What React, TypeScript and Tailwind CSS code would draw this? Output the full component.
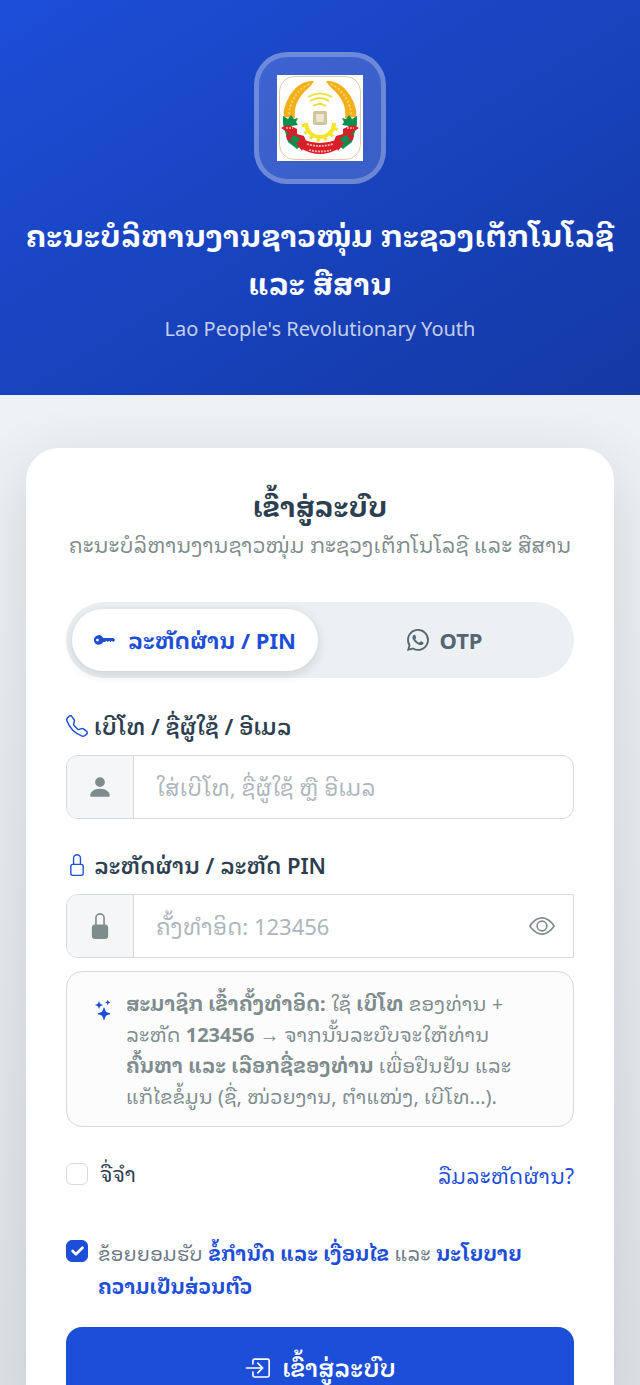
import { useState } from 'react'
import { BsBoxArrowInRight, BsEye, BsKeyFill, BsPersonFill, BsStars, BsTelephone, BsWhatsapp } from 'react-icons/bs'

function LockIcon({ className }: { className?: string }) {
  return (
    <svg viewBox="0 0 16 16" fill="currentColor" className={className} aria-hidden="true">
      <path d="M8 1a2 2 0 0 1 2 2v4H6V3a2 2 0 0 1 2-2zm3 6V3a3 3 0 0 0-6 0v4a2 2 0 0 0-2 2v5a2 2 0 0 0 2 2h6a2 2 0 0 0 2-2V9a2 2 0 0 0-2-2zM5 8h6a1 1 0 0 1 1 1v5a1 1 0 0 1-1 1H5a1 1 0 0 1-1-1V9a1 1 0 0 1 1-1z" />
    </svg>
  )
}

function LockFillIcon({ className }: { className?: string }) {
  return (
    <svg viewBox="0 0 16 16" fill="currentColor" className={className} aria-hidden="true">
      <path d="M8 1a2 2 0 0 1 2 2v4H6V3a2 2 0 0 1 2-2zm3 6V3a3 3 0 0 0-6 0v4a2 2 0 0 0-2 2v5a2 2 0 0 0 2 2h6a2 2 0 0 0 2-2V9a2 2 0 0 0-2-2z" />
    </svg>
  )
}

function Emblem() {
  return (
    <svg viewBox="0 0 86 86" className="size-[86px]" role="img" aria-label="Logo">
      <rect width="86" height="86" fill="#fffdf8" />
      <rect x="2.5" y="1.5" width="81" height="83" rx="15" fill="#fff" stroke="#e8b98a" strokeWidth="0.8" />
      {/* wheat */}
      <path d="M37 6C28 5 17 11 11 24c-4 8-5 13-4 18l11 1c-1-9 1-15 6-22 4-6 10-9 13-15Z" fill="#f3b01c" />
      <path d="M49 6c9-1 20 5 26 18 4 8 5 13 4 18l-11 1c1-9-1-15-6-22-4-6-10-9-13-15Z" fill="#f3b01c" />
      <path d="M32 9C20 15 12 27 12 41M54 9c12 6 20 18 20 32" fill="none" stroke="#fbd45c" strokeWidth="2" strokeDasharray="2 2" />
      {/* leaves */}
      <path d="M6 41l5 3 3-4 3 4 4-1-2 4 2 3-7 1 2 14 8 6-4 3-9-7-5-18Z" fill="#0b8f4d" />
      <path d="M80 41l-5 3-3-4-3 4-4-1 2 4-2 3 7 1-2 14-8 6 4 3 9-7 5-18Z" fill="#0b8f4d" />
      {/* signal */}
      <path d="M31 22q12-7 24 0M33 26q10-6 19 0M36 31q7-4 13 0" fill="none" stroke="#f1df3c" strokeWidth="1.8" />
      {/* gear */}
      <path d="M29 48a14 14 0 0 0 28 0" fill="none" stroke="#f6e32a" strokeWidth="4" />
      <path d="M27 49a16 15 0 0 0 32 0" fill="none" stroke="#f6e32a" strokeWidth="5" strokeDasharray="3 4" />
      {/* chip */}
      <rect x="36" y="36" width="14" height="14" rx="2" fill="#cfc59c" />
      <rect x="39" y="39" width="8" height="8" rx="1" fill="#ece6cd" />
      {/* ribbon */}
      <path d="M4 53q6-5 12-1l4 2v5l7 2 2 5-4 10-7-9-8-2-1-5 4-1Z" fill="#d61f2b" />
      <path d="M82 53q-6-5-12-1l-4 2v5l-7 2-2 5 4 10 7-9 8-2 1-5-4-1Z" fill="#d61f2b" />
      <path d="M16 60l7 3-2 5-8-3ZM70 60l-7 3 2 5 8-3Z" fill="#0b8f4d" />
      <path d="M27 65q16 6 32 0l2 9q-18 10-36 0Z" fill="#dc1c27" />
      <path d="M30 69q13 4 26 0M32 75q11 3 22 0" fill="none" stroke="#f7b5b0" strokeWidth="1.8" strokeDasharray="2 1" />
      <path d="M9 53h7M70 53h7" stroke="#f7b5b0" strokeWidth="1.4" strokeDasharray="2 1" />
    </svg>
  )
}

export default function App() {
  const [tab, setTab] = useState('pin')
  const [showPassword, setShowPassword] = useState(false)

  const tabBase = 'flex items-center justify-center rounded-full text-[22px] font-bold h-[62px] whitespace-nowrap cursor-pointer'
  const tabActive = 'bg-white text-[#1d4ed8] shadow-[0_3px_12px_rgba(0,0,0,0.14)]'

  return (
    <div className="min-h-screen bg-linear-to-b from-[#f5f7fa] to-[#dfe4e8] font-['Noto_Sans','Noto_Sans_Lao_Looped',sans-serif] text-[#2c3e50]">
      <header className="flex flex-col items-center bg-linear-to-br from-[#1d4ed8] to-[#1439a5] px-5 pt-[52px] pb-[50px] text-center">
        <div className="flex size-[132px] items-center justify-center rounded-[33px] border-5 border-white/25 bg-white/15">
          <Emblem />
        </div>
        <h1 className="mt-7 text-[30px] leading-[48px] font-bold text-white">
          ຄະນະບໍລິຫານງານຊາວໜຸ່ມ ກະຊວງເຕັກໂນໂລຊີ ແລະ ສືສານ
        </h1>
        <p className="mt-[5px] text-[20px] leading-8 text-white/75">Lao People's Revolutionary Youth</p>
      </header>

      <main className="px-[26px] pt-[53px]">
        <div className="rounded-t-[33px] bg-white px-10 pt-9 shadow-[0_16px_64px_rgba(0,0,0,0.12)]">
          <h2 className="text-center text-[28px] leading-[44px] font-bold">ເຂົ້າສູ່ລະບົບ</h2>
          <p className="text-center text-[21px] leading-[34px] whitespace-nowrap text-[#7f8c8d]">
            ຄະນະບໍລິຫານງານຊາວໜຸ່ມ ກະຊວງເຕັກໂນໂລຊີ ແລະ ສືສານ
          </p>

          <div className="mt-10 grid grid-cols-2 gap-1 rounded-full bg-[#ecf0f3] px-1.5 py-[7px]">
            <button
              type="button"
              onClick={() => setTab('pin')}
              className={`${tabBase} gap-3 ${tab === 'pin' ? tabActive : 'text-[#566573]'}`}
            >
              <BsKeyFill className="size-[22px]" />
              ລະຫັດຜ່ານ / PIN
            </button>
            <button
              type="button"
              onClick={() => setTab('otp')}
              className={`${tabBase} gap-2.5 ${tab === 'otp' ? tabActive : 'text-[#566573]'}`}
            >
              <BsWhatsapp className="size-[22px]" />
              OTP
            </button>
          </div>

          <form onSubmit={(e) => e.preventDefault()}>
            <label htmlFor="username" className="mt-8 flex items-center gap-1.5 text-[22px] leading-8 font-semibold">
              <BsTelephone className="size-[22px] text-[#1d4ed8]" />
              ເບີໂທ / ຊື່ຜູ້ໃຊ້ / ອີເມລ
            </label>
            <div className="mt-[13px] flex h-16 overflow-hidden rounded-xl border border-[#d5dadd]">
              <span className="flex w-[67px] shrink-0 items-center justify-center border-r border-[#d5dadd] bg-[#f4f6f8]">
                <BsPersonFill className="size-[26px] text-[#7f8c8d]" />
              </span>
              <input
                id="username"
                type="text"
                placeholder="ໃສ່ເບີໂທ, ຊື່ຜູ້ໃຊ້ ຫຼື ອີເມລ"
                className="min-w-0 flex-1 px-[22px] text-[22px] outline-none placeholder:text-[#adb5bd]"
              />
            </div>

            <label htmlFor="password" className="mt-[30px] flex items-center gap-1.5 text-[22px] leading-8 font-semibold">
              <LockIcon className="size-[22px] text-[#1d4ed8]" />
              ລະຫັດຜ່ານ / ລະຫັດ PIN
            </label>
            <div className="mt-[13px] flex h-16 overflow-hidden rounded-l-xl border border-[#d5dadd]">
              <span className="flex w-[67px] shrink-0 items-center justify-center border-r border-[#d5dadd] bg-[#f4f6f8]">
                <LockFillIcon className="size-[26px] text-[#7f8c8d]" />
              </span>
              <input
                id="password"
                type={showPassword ? 'text' : 'password'}
                placeholder="ຄັ້ງທຳອິດ: 123456"
                className="min-w-0 flex-1 px-[22px] text-[22px] outline-none placeholder:text-[#adb5bd]"
              />
              <button
                type="button"
                aria-label="ສະແດງລະຫັດຜ່ານ"
                onClick={() => setShowPassword(!showPassword)}
                className="px-[18px] text-[#7f8c8d]"
              >
                <BsEye className="size-[26px]" />
              </button>
            </div>

            <div className="mt-[13px] flex gap-3 rounded-2xl border border-[#d5dadd] bg-[#fcfcfd] pt-4 pr-10 pb-[14px] pl-[27px] text-[#7f8c8d]">
              <BsStars className="mt-3 size-5 shrink-0 text-[#1d4ed8]" />
              <p className="text-[20px] leading-[31px]">
                <strong>ສະມາຊິກ ເຂົ້າຄັ້ງທຳອິດ:</strong> ໃຊ້ <strong>ເບີໂທ</strong> ຂອງທ່ານ + ລະຫັດ{' '}
                <strong>123456</strong> → ຈາກນັ້ນລະບົບຈະໃຫ້ທ່ານ <strong>ຄົ້ນຫາ ແລະ ເລືອກຊື່ຂອງທ່ານ</strong> ເພື່ອຢືນຢັນ
                ແລະ ແກ້ໄຂຂໍ້ມູນ (ຊື່, ໜ່ວຍງານ, ຕຳແໜ່ງ, ເບີໂທ...).
              </p>
            </div>

            <div className="mt-7 flex items-center justify-between">
              <label className="flex items-center gap-3 text-[21px] leading-[34px]">
                <input type="checkbox" className="size-[22px] appearance-none rounded-md border border-[#d5dadd] bg-white checked:bg-[#1d4ed8]" />
                ຈື່ຈຳ
              </label>
              <a href="#forgot" className="pt-1 text-[21px] leading-[34px] text-[#1d4ed8]">
                ລືມລະຫັດຜ່ານ?
              </a>
            </div>

            <div className="mt-11 flex gap-2.5">
              <span className="mt-[3px] grid shrink-0 self-start">
                <input
                  id="terms"
                  type="checkbox"
                  defaultChecked
                  className="peer col-start-1 row-start-1 size-[22px] appearance-none rounded-md border border-[#d5dadd] checked:border-[#1d4ed8] checked:bg-[#1d4ed8]"
                />
                <svg viewBox="0 0 20 20" className="pointer-events-none invisible col-start-1 row-start-1 size-[22px] peer-checked:visible">
                  <path d="m6 10 3 3 6-6" fill="none" stroke="#fff" strokeWidth="2.4" strokeLinecap="round" strokeLinejoin="round" />
                </svg>
              </span>
              <label htmlFor="terms" className="pr-6 text-[20px] leading-[33px] text-[#6b7785]">
                ຂ້ອຍຍອມຮັບ{' '}
                <a href="#terms" className="font-bold text-[#1d4ed8]">ຂໍ້ກຳນົດ ແລະ ເງື່ອນໄຂ</a> ແລະ{' '}
                <a href="#privacy" className="font-bold text-[#1d4ed8]">ນະໂຍບາຍຄວາມເປັນສ່ວນຕົວ</a>
              </label>
            </div>

            <button
              type="submit"
              className="mt-6 flex h-[82px] w-full items-center justify-center gap-3 rounded-2xl bg-[#1d4ed8] text-[24px] font-semibold text-white"
            >
              <BsBoxArrowInRight className="size-[26px]" />
              ເຂົ້າສູ່ລະບົບ
            </button>
          </form>
        </div>
      </main>
    </div>
  )
}
